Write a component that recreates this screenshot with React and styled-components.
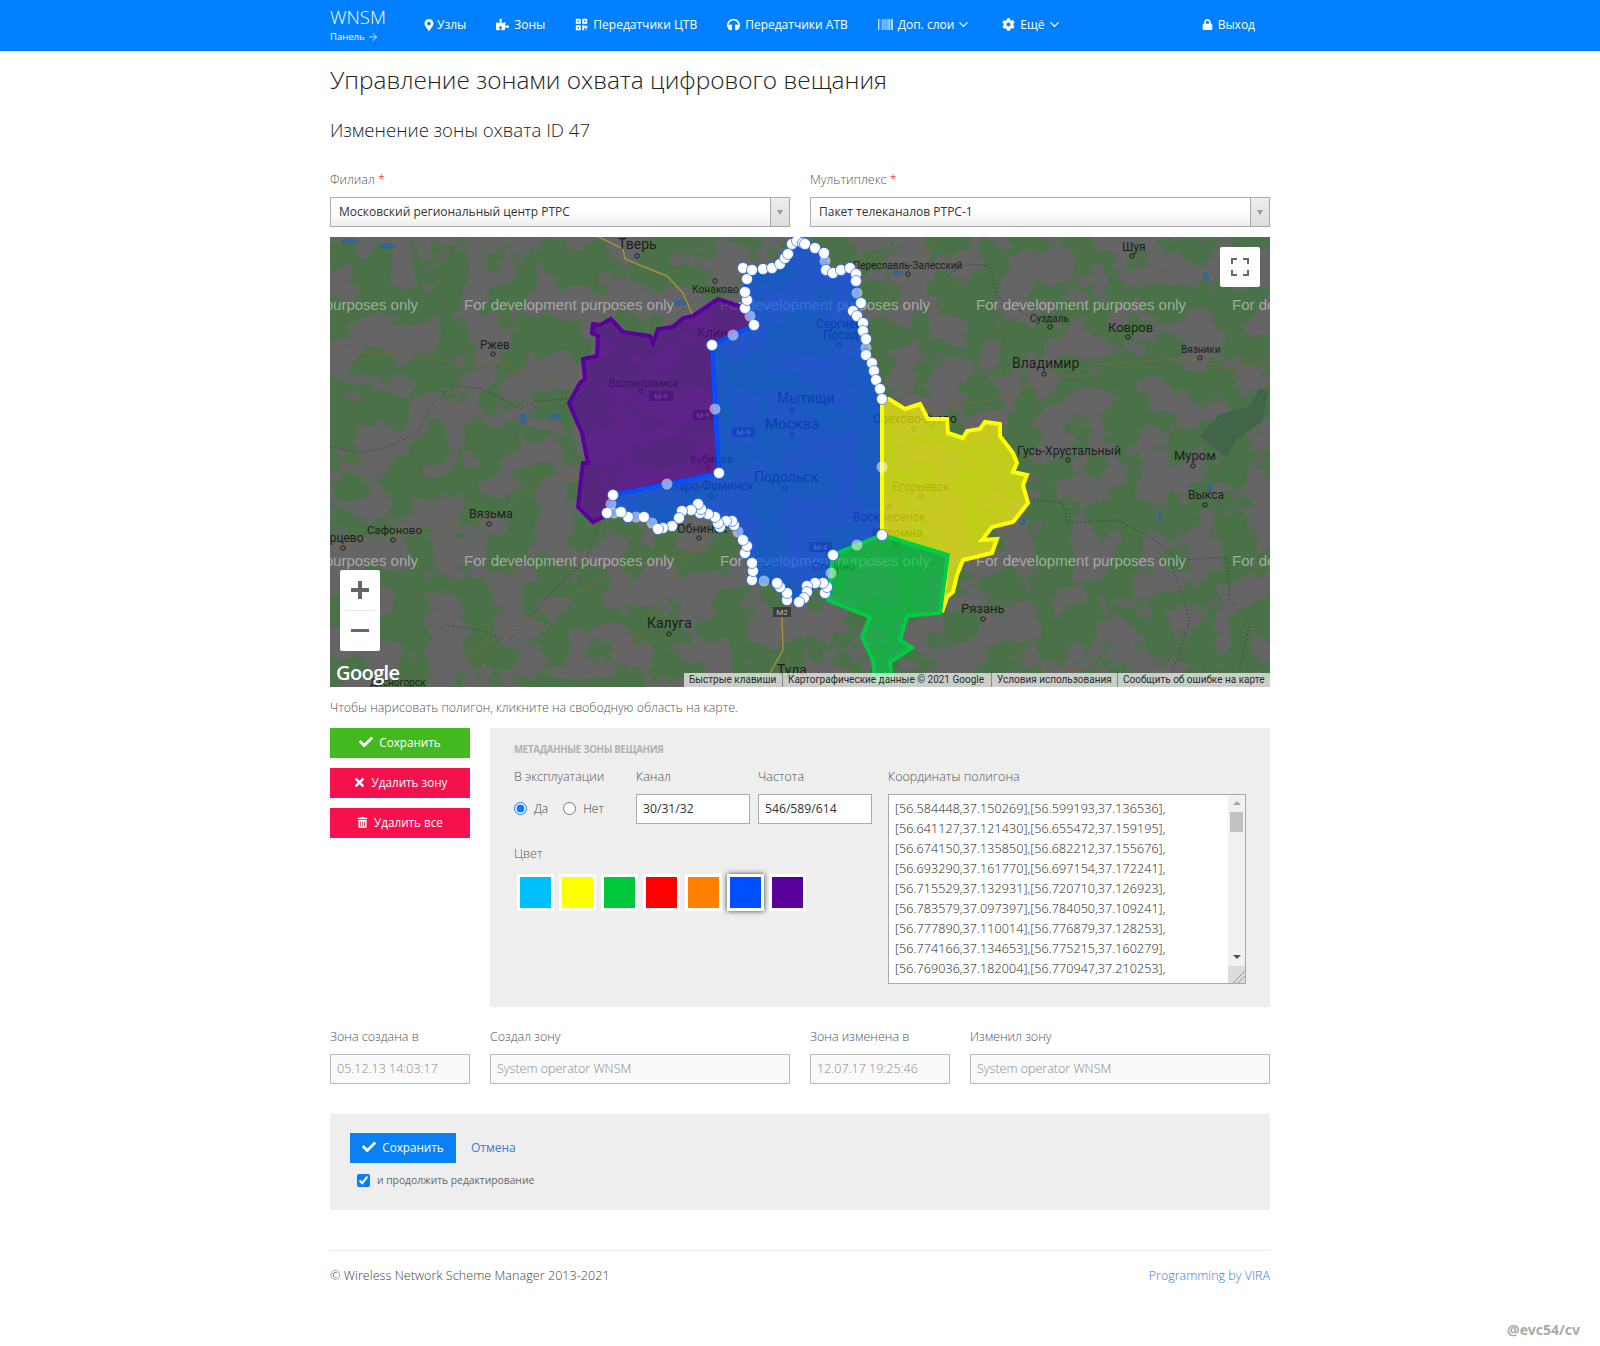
import React from 'react';
import styled, { createGlobalStyle } from 'styled-components';
import { FaMapMarkerAlt, FaPuzzlePiece, FaQrcode, FaHeadphones, FaBarcode, FaCog, FaLock, FaCheck, FaTimes, FaTrashAlt } from 'react-icons/fa';
import { ArrowRight, ChevronDown } from 'lucide-react';

const GlobalStyle = createGlobalStyle`
  html, body { margin: 0; padding: 0; background: #fff; }
  body { font-family: "Open Sans", "Liberation Sans", sans-serif; font-size: 12px; color: #333; min-height: 1346px; position: relative; }
  * { box-sizing: border-box; }
`;

const Navbar = styled.nav`
  background: #0080ff;
  height: 51px;
  color: #fff;
`;
const NavInner = styled.div`
  width: 940px;
  height: 100%;
  margin: 0 auto;
  padding-bottom: 2px;
  display: flex;
  align-items: center;
`;
const Brand = styled.a`
  display: block;
  width: 93px;
  margin-bottom: 4px;
  color: #fff;
`;
const BrandName = styled.div`
  font-size: 18.5px;
  font-weight: 300;
  line-height: 22px;
`;
const BrandSub = styled.div`
  font-size: 9.5px;
  line-height: 12px;
  margin-top: 3px;
  margin-bottom: -3px;
  display: flex;
  align-items: center;
  gap: 2px;
`;
const NavLink = styled.a`
  display: flex;
  align-items: center;
  gap: ${p => p.$gap ?? 5}px;
  font-size: 12px;
  color: #fff;
  margin-right: 30px;
  svg { flex: none; }
`;
const NavExit = styled(NavLink)`
  margin: 0 15px 0 auto;
`;
const NavChevron = styled(ChevronDown)`
  margin: 0 1px 0 -3px;
`;

const Page = styled.main`
  width: 940px;
  margin: 0 auto;
`;
const Title = styled.h1`
  font-size: 24.4px;
  font-weight: 300;
  line-height: 32px;
  margin: 13px 0 0;
  color: #222;
`;
const Subtitle = styled.h2`
  font-size: 18.6px;
  font-weight: 300;
  line-height: 24px;
  margin: 22px 0 0;
  color: #222;
`;
const Grid = styled.div`
  display: grid;
  grid-template-columns: repeat(12, 60px);
  column-gap: 20px;
  margin-top: ${p => p.$top || 0}px;
`;
const Col = styled.div`
  grid-column: span ${p => p.$span};
`;
const Label = styled.label`
  display: block;
  padding-top: 1px;
  font-size: 12.5px;
  font-weight: 300;
  line-height: 16px;
  margin-bottom: 9px;
  color: #555;
`;
const Req = styled.span`
  color: #e22;
`;
const SelectBox = styled.div`
  display: flex;
  height: 30px;
  border: 1px solid #aaa;
  background: linear-gradient(#fff 50%, #eee);
`;
const SelectValue = styled.div`
  flex: 1;
  padding-left: 8px;
  line-height: 28px;
  font-size: 12px;
  color: #333;
`;
const SelectArrow = styled.div`
  width: 19px;
  border-left: 1px solid #aaa;
  background: linear-gradient(#eee, #ddd);
  display: flex;
  align-items: center;
  justify-content: center;
  &::after {
    content: '';
    border: 3px solid transparent;
    border-top: 5px solid #999;
    border-bottom: 0;
  }
`;

const MapFrame = styled.div`
  position: relative;
  height: 450px;
  margin-top: 10px;
  overflow: hidden;
  background: #656565;
`;
const MapSvg = styled.svg`
  display: block;
  font-family: Roboto, "Liberation Sans", sans-serif;
`;
const FullscreenButton = styled.button`
  position: absolute;
  top: 10px;
  right: 10px;
  width: 40px;
  height: 40px;
  padding: 0;
  border: 0;
  border-radius: 2px;
  background: #fff;
  display: flex;
  align-items: center;
  justify-content: center;
`;
const ZoomControl = styled.div`
  position: absolute;
  left: 10px;
  top: 333px;
  width: 40px;
  height: 81px;
  border-radius: 2px;
  background: #fff;
  display: flex;
  flex-direction: column;
  align-items: center;
`;
const ZoomButton = styled.div`
  height: 40px;
  width: 100%;
  display: flex;
  align-items: center;
  justify-content: center;
`;
const ZoomDivider = styled.div`
  width: 30px;
  height: 1px;
  background: #e6e6e6;
`;
const GoogleLogo = styled.div`
  position: absolute;
  left: 6px;
  bottom: 2px;
  color: #fff;
  font-family: "Open Sans", "Liberation Sans", sans-serif;
  font-size: 20px;
  font-weight: 600;
  line-height: 24px;
  letter-spacing: -0.6px;
`;
const Attribution = styled.div`
  position: absolute;
  right: 0;
  bottom: 0;
  width: 586px;
  height: 14px;
  display: flex;
  align-items: center;
  background: rgba(255, 255, 255, 0.68);
  font-family: Roboto, "Liberation Sans", sans-serif;
  font-size: 10px;
  color: #2a2a2a;
`;
const AttributionItem = styled.span`
  padding: 0 5px;
  line-height: 14px;
  white-space: nowrap;
  width: ${p => p.$width}px;
  & + & { border-left: 1px solid #888; }
`;

const Hint = styled.p`
  font-size: 12.35px;
  font-weight: 300;
  line-height: 16px;
  margin: 13px 0 0;
  color: #555;
`;
const ButtonStack = styled.div`
  display: flex;
  flex-direction: column;
  gap: 10px;
`;
const Button = styled.button`
  height: 30px;
  width: ${p => p.$width || '100%'};
  border: 0;
  padding: 0 0 2px;
  color: #fff;
  background: ${p => p.$bg};
  font-family: inherit;
  font-size: 11.7px;
  display: flex;
  align-items: center;
  justify-content: center;
  gap: 6px;
`;
const MetaPanel = styled.section`
  background: #eee;
  padding: 15px 24px 23px;
`;
const MetaTitle = styled.h3`
  margin: 0 0 11px;
  font-size: 9.7px;
  line-height: 14px;
  font-weight: 700;
  text-transform: uppercase;
  color: #b0b0b0;
  letter-spacing: -0.3px;
`;
const MetaColumns = styled.div`
  display: grid;
  grid-template-columns: 358px 358px;
  column-gap: 16px;
`;
const MetaFields = styled.div`
  display: grid;
  grid-template-columns: repeat(3, 114px);
  column-gap: 8px;
`;
const RadioRow = styled.div`
  height: 30px;
  padding-bottom: 1px;
  display: flex;
  align-items: center;
  font-size: 12px;
  font-weight: 300;
  color: #444;
`;
const RadioItem = styled.label`
  display: flex;
  align-items: center;
  gap: 7px;
  margin-right: 15px;
  input { margin: 0; width: 13px; height: 13px; accent-color: #0a7cff; }
`;
const TextInput = styled.input`
  display: block;
  width: 100%;
  height: 30px;
  padding: 0 6px 2px;
  border: 1px solid ${p => (p.disabled ? '#bbb' : '#aaa')};
  border-radius: 0;
  background: ${p => (p.disabled ? '#fafafa' : '#fff')};
  font-family: inherit;
  font-size: ${p => (p.disabled ? 12.5 : 12.2)}px;
  font-weight: ${p => (p.disabled ? 300 : 400)};
  color: ${p => (p.disabled ? '#888' : '#333')};
  outline: 0;
`;
const ColorLabel = styled(Label)`
  margin: 21px 0 12px;
`;
const Swatches = styled.div`
  display: flex;
  gap: 5px;
  padding-left: 3px;
`;
const Swatch = styled.div`
  width: 37px;
  height: 37px;
  border: 3px solid #fff;
  background: ${p => p.$color};
  box-shadow: ${p => (p.$selected ? '0 0 5px rgba(0, 0, 0, 0.75)' : 'none')};
`;
const CoordsWrap = styled.div`
  position: relative;
  height: 190px;
`;
const CoordsArea = styled.textarea`
  display: block;
  width: 100%;
  height: 100%;
  padding: 4px 24px 0 6px;
  border: 1px solid #aaa;
  border-radius: 0;
  background: #fff;
  font-family: inherit;
  font-size: 12.5px;
  font-weight: 300;
  letter-spacing: 0.08px;
  line-height: 20px;
  color: #222;
  resize: none;
  overflow: hidden;
  outline: 0;
`;
const Scrollbar = styled.div`
  position: absolute;
  top: 1px;
  right: 1px;
  bottom: 1px;
  width: 17px;
  background: #f1f1f1;
  display: flex;
  flex-direction: column;
  align-items: center;
`;
const ScrollUp = styled.div`
  margin-top: 6px;
  border: 4px solid transparent;
  border-bottom: 4px solid #a3a3a3;
  border-top: 0;
`;
const ScrollThumb = styled.div`
  width: 13px;
  height: 20px;
  margin-top: 7px;
  background: #c1c1c1;
`;
const ScrollDown = styled.div`
  margin-top: 123px;
  border: 4px solid transparent;
  border-top: 4px solid #505050;
  border-bottom: 0;
`;
const ResizeCorner = styled.div`
  margin-top: auto;
  width: 17px;
  height: 17px;
  background:
    linear-gradient(135deg, transparent 62%, #999 62%, #999 66%, transparent 66%, transparent 78%, #999 78%, #999 82%, transparent 82%),
    #dcdcdc;
`;
const ActionPanel = styled.section`
  margin-top: 30px;
  height: 96px;
  padding: 19px 20px 0;
  background: #eee;
`;
const ActionRow = styled.div`
  display: flex;
  align-items: center;
  gap: 15px;
`;
const CancelLink = styled.a`
  font-size: 12px;
  color: #3a7bd5;
  margin-top: -2px;
`;
const ContinueRow = styled.label`
  display: flex;
  align-items: center;
  gap: 7px;
  margin: 10px 0 0 7px;
  font-size: 10.3px;
  color: #666;
  input { margin: 0; width: 13px; height: 13px; accent-color: #0a7cff; }
`;
const Footer = styled.footer`
  margin-top: 40px;
  padding-top: 17px;
  border-top: 1px solid #eee;
  display: flex;
  justify-content: space-between;
  font-size: 12.5px;
  font-weight: 300;
  line-height: 16px;
  color: #444;
`;
const Copyright = styled.span`
  letter-spacing: 0.07px;
`;
const FooterLink = styled.a`
  color: #3a7bd5;
`;
const Watermark = styled.div`
  position: absolute;
  right: 20px;
  bottom: 7px;
  font-family: "Noto Sans", sans-serif;
  font-size: 14px;
  font-weight: 700;
  color: #aaa;
`;

const cities = [
  ['Тверь', 618, 249, 14, 637, 256], ['Конаково', 692, 293, 10.3, 715, 281], ['Ржев', 480, 349, 12, 493, 354],
  ['Клин', 697, 337, 13], ['Волоколамск', 609, 387, 11, 641, 391], ['Мытищи', 777, 403, 14, 792, 410],
  ['Москва', 765, 429, 15, 792, 435], ['Кубинка', 690, 463, 11, 708, 467], ['Наро-Фоминск', 670, 490, 12, 711, 496],
  ['Подольск', 754, 482, 14, 785, 488], ['Сергиев', 816, 328, 12], ['Посад', 823, 339, 12, 839, 345],
  ['Шуя', 1122, 251, 12, 1132, 256], ['Переславль-Залесский', 853, 269, 10, 908, 274], ['Суздаль', 1030, 322, 10, 1050, 327],
  ['Ковров', 1108, 332, 13, 1128, 337], ['Вязники', 1181, 353, 10, 1200, 358], ['Владимир', 1012, 368, 14, 1044, 374],
  ['Орехово-Зуево', 873, 423, 12, 914, 429], ['Гусь-Хрустальный', 1017, 455, 12.2, 1068, 460], ['Муром', 1174, 460, 13, 1193, 466],
  ['Выкса', 1188, 499, 12, 1205, 505], ['Егорьевск', 892, 491, 12, 921, 496], ['Воскресенск', 853, 521, 12, 889, 507],
  ['Коломна', 872, 537, 12, 896, 543], ['Ступино', 812, 570, 11, 836, 572], ['Рязань', 961, 613, 13, 983, 619],
  ['Калуга', 647, 628, 14, 669, 634], ['Тула', 777, 675, 14], ['Вязьма', 469, 518, 12.5, 489, 524],
  ['Сафоново', 367, 534, 11.5, 393, 540], ['Ярцево', 322, 542, 12, 343, 548], ['Обнинск', 677, 533, 12.5, 699, 538],
  ['Десногорск', 370, 686, 10],
];

const shields = [
  ['М-9', 649, 391, 24], ['М-9', 693, 410, 20], ['М-9', 732, 427, 23], ['М-4', 809, 542, 23], ['М2', 773, 607, 18],
];

const roads = [
  ['597,236 623,249 625,259 647,268 667,276 683,293 693,316', '#a58f3d', 1.5],
  ['330,351 390,353 450,361 497,361 520,371 580,383', '#77683f', 1],
  ['330,548 393,535 430,528 473,525 503,510 543,480 563,477 580,477', '#77683f', 1],
  ['430,680 510,630 623,567 680,557 700,548 707,530', '#77683f', 1],
  ['583,687 603,660 647,630 660,600 677,570 703,547', '#77683f', 1],
  ['782,617 783,650 770,673', '#a58f3d', 1.5],
  ['783,650 797,673', '#77683f', 1],
  ['927,411 1013,396 1047,376 1087,376 1097,364 1190,358 1233,369 1270,358', '#77683f', 1],
  ['950,593 982,618 1013,640 1043,672 1087,670', '#77683f', 1],
  ['877,313 900,279 913,274 937,236', '#77683f', 1],
];

const borders = [
  '330,446 363,453 390,446 417,433 430,406 453,386 480,388 503,399 520,409 537,401 567,399',
  '1033,500 1063,503 1067,523 1117,520 1150,537 1180,560 1227,557 1230,600 1250,623 1240,667',
  '947,276 967,264 990,266 997,296 1033,319',
  '600,522 585,560 545,600 510,640',
  '430,640 445,625 480,630 505,640',
  '1170,560 1190,620 1170,680',
];

const lakes = [
  [350, 241, 9, 3], [387, 246, 8, 3], [680, 303, 8, 3], [523, 419, 4, 6], [555, 416, 8, 3], [898, 273, 5, 3],
  [1206, 277, 3, 5], [1023, 522, 3, 4], [1210, 488, 2, 5], [1160, 517, 2, 6],
];

const purpleZone = '718,299 693,316 683,318 673,327 658,329 653,343 650,336 623,332 611,319 600,325 593,324 592,333 598,336 597,356 583,359 585,379 580,383 569,403 582,433 588,463 583,463 582,470 578,507 593,522 607,515 613,495 719,473 712,345 754,325 745,308';
const yellowZone = '882,399 889,399 905,409 920,404 928,419 947,419 948,433 963,438 967,431 980,429 985,422 1000,424 1000,436 1013,453 1017,463 1013,472 1027,475 1023,485 1028,503 1013,522 992,527 982,540 997,539 992,553 963,560 957,575 953,592 947,597 942,612 948,555 882,535';
const greenZone = '882,535 948,555 940,613 907,616 900,640 912,648 890,662 892,680 875,680 873,660 862,637 870,617 845,607 828,600 831,573 833,555 857,545';

// third value marks a ghost (mid-segment) handle
const blueHandles = [
  [712, 345], [733, 335, 1], [754, 325], [750, 316, 1], [745, 308], [747, 300], [745, 292], [747, 279], [743, 268], [752, 270], [763, 269], [772, 268], [780, 264], [785, 258], [788, 254], [792, 244], [797, 241], [803, 243],
  [805, 244], [815, 248], [824, 253], [825, 261, 1], [826, 270], [833, 273], [841, 270], [850, 268], [856, 274], [856, 281], [857, 293, 1], [861, 303], [853, 311], [857, 316], [863, 323], [863, 331], [866, 339], [866, 348, 1], [866, 355], [872, 363], [874, 371], [876, 380], [880, 389], [882, 399],
  [882, 467, 1], [882, 535], [857, 545, 1], [833, 555], [831, 573, 1], [825, 593], [827, 587], [823, 583], [815, 583], [807, 586], [807, 592], [804, 598], [799, 602], [787, 600], [787, 593], [780, 587], [777, 583], [764, 581, 1], [752, 580], [753, 571], [752, 563], [745, 553], [747, 546], [743, 540], [738, 532, 1], [734, 525], [732, 521], [726, 521], [720, 527], [718, 523], [715, 517], [708, 514], [700, 513], [701, 509], [698, 504], [691, 510], [682, 511], [679, 518], [672, 526], [663, 528], [658, 529], [652, 523, 1], [644, 517], [636, 517, 1], [628, 517], [621, 512], [614, 513, 1], [607, 513], [611, 504, 1], [613, 495], [667, 484, 1], [719, 473], [715, 409, 1],
];
const blueZone = blueHandles.map(([x, y]) => `${x},${y}`).join(' ');

const MapDrawing = () => (
  <MapSvg width="940" height="450" viewBox="330 237 940 450">
    <defs>
      <filter id="land" x="0" y="0" width="100%" height="100%" colorInterpolationFilters="sRGB">
        <feTurbulence type="fractalNoise" baseFrequency="0.028" numOctaves="5" seed="11" />
        <feColorMatrix values="0 0 0 0 0.29  0 0 0 0 0.445  0 0 0 0 0.282  18 0 0 0 -8.3" />
      </filter>
    </defs>
    <rect x="330" y="237" width="940" height="450" fill="#656565" />
    <rect x="330" y="237" width="940" height="450" filter="url(#land)" />
    <path d="M1200 436 l20 -22 30 -8 10 -18 8 4 -6 30 -26 18 -10 18z" fill="#42654a" />
    {lakes.map(([cx, cy, rx, ry], i) => <ellipse key={i} cx={cx} cy={cy} rx={rx} ry={ry} fill="#38658c" />)}
    {borders.map((points, i) => <polyline key={i} points={points} fill="none" stroke="#3f3f3f" strokeWidth="1" strokeDasharray="1.5 2.5" />)}
    {roads.map(([points, color, width], i) => <polyline key={i} points={points} fill="none" stroke={color} strokeWidth={width} />)}
    {[208, 464, 720, 976, 1232].map(x => [305, 561].map(y => (
      <text key={`${x}-${y}`} x={x} y={y + 5} fontSize="15" fill="#fff" fillOpacity="0.45" fontFamily='"Liberation Sans", sans-serif'>For development purposes only</text>
    )))}
    {shields.map(([name, x, y, w], i) => (
      <g key={i}>
        <rect x={x} y={y} width={w} height="10" fill="#3c3c3c" />
        <text x={x + w / 2} y={y + 8} fontSize="8" textAnchor="middle" fill="#bbb">{name}</text>
      </g>
    ))}
    {cities.map(([name, x, y, size, mx, my]) => (
      <g key={name}>
        <text x={x} y={y} fontSize={size} fill="#1d1d1d">{name}</text>
        {mx && <circle cx={mx} cy={my} r="2.2" fill="none" stroke="#1d1d1d" strokeWidth="1" />}
      </g>
    ))}
    <polygon points={purpleZone} fill="#5a009d" fillOpacity="0.65" stroke="#5a009d" strokeWidth="4" />
    <polygon points={blueZone} fill="#0050ff" fillOpacity="0.65" stroke="#0050ff" strokeWidth="4" />
    <polygon points={yellowZone} fill="#ffff00" fillOpacity="0.65" stroke="#ffff00" strokeWidth="4" />
    <polygon points={greenZone} fill="#00cc44" fillOpacity="0.65" stroke="#00cc44" strokeWidth="4" />
    {blueHandles.map(([x, y, ghost], i) => (
      <circle key={i} cx={x} cy={y} r="5.5" fill="#fff" fillOpacity={ghost ? 0.5 : 1} stroke={ghost ? 'none' : '#0050ff'} strokeWidth="0.6" />
    ))}
  </MapSvg>
);

const colors = ['#00bfff', '#ffff00', '#00c83c', '#ff0000', '#ff8000', '#0050ff', '#5a009d'];

const coords = `[56.584448,37.150269],[56.599193,37.136536],
[56.641127,37.121430],[56.655472,37.159195],
[56.674150,37.135850],[56.682212,37.155676],
[56.693290,37.161770],[56.697154,37.172241],
[56.715529,37.132931],[56.720710,37.126923],
[56.783579,37.097397],[56.784050,37.109241],
[56.777890,37.110014],[56.776879,37.128253],
[56.774166,37.134653],[56.775215,37.160279],
[56.769036,37.182004],[56.770947,37.210253],`;

const App = () => (
  <>
    <GlobalStyle />
    <Navbar>
      <NavInner>
        <Brand>
          <BrandName>WNSM</BrandName>
          <BrandSub>Панель <ArrowRight size={12} strokeWidth={1.5} /></BrandSub>
        </Brand>
        <NavLink $gap={2}><FaMapMarkerAlt size={12} /> Узлы</NavLink>
        <NavLink><FaPuzzlePiece size={13} /> Зоны</NavLink>
        <NavLink><FaQrcode size={13} /> Передатчики ЦТВ</NavLink>
        <NavLink><FaHeadphones size={13} /> Передатчики АТВ</NavLink>
        <NavLink><FaBarcode size={15} /> Доп. слои <NavChevron size={15} /></NavLink>
        <NavLink><FaCog size={13} /> Ещё <NavChevron size={15} /></NavLink>
        <NavExit><FaLock size={11} /> Выход</NavExit>
      </NavInner>
    </Navbar>
    <Page>
      <Title>Управление зонами охвата цифрового вещания</Title>
      <Subtitle>Изменение зоны охвата ID 47</Subtitle>
      <Grid $top={29}>
        <Col $span={6}>
          <Label>Филиал <Req>*</Req></Label>
          <SelectBox><SelectValue>Московский региональный центр РТРС</SelectValue><SelectArrow /></SelectBox>
        </Col>
        <Col $span={6}>
          <Label>Мультиплекс <Req>*</Req></Label>
          <SelectBox><SelectValue>Пакет телеканалов РТРС-1</SelectValue><SelectArrow /></SelectBox>
        </Col>
      </Grid>
      <MapFrame>
        <MapDrawing />
        <FullscreenButton>
          <svg width="18" height="18" viewBox="0 0 18 18" fill="none" stroke="#666" strokeWidth="2">
            <path d="M1 6V1h5M12 1h5v5M17 12v5h-5M6 17H1v-5" />
          </svg>
        </FullscreenButton>
        <ZoomControl>
          <ZoomButton>
            <svg width="18" height="18" viewBox="0 0 18 18" fill="#666"><path d="M7 0h4v7h7v4h-7v7H7v-7H0V7h7z" /></svg>
          </ZoomButton>
          <ZoomDivider />
          <ZoomButton>
            <svg width="18" height="18" viewBox="0 0 18 18" fill="#666"><path d="M0 7h18v3H0z" /></svg>
          </ZoomButton>
        </ZoomControl>
        <GoogleLogo>Google</GoogleLogo>
        <Attribution>
          <AttributionItem $width={98}>Быстрые клавиши</AttributionItem>
          <AttributionItem $width={209}>Картографические данные © 2021 Google</AttributionItem>
          <AttributionItem $width={126}>Условия использования</AttributionItem>
          <AttributionItem $width={153}>Сообщить об ошибке на карте</AttributionItem>
        </Attribution>
      </MapFrame>
      <Hint>Чтобы нарисовать полигон, кликните на свободную область на карте.</Hint>
      <Grid $top={12}>
        <Col $span={2}>
          <ButtonStack>
            <Button $bg="#42b91e"><FaCheck size={14} /> Сохранить</Button>
            <Button $bg="#f5114b"><FaTimes size={13} /> Удалить зону</Button>
            <Button $bg="#f5114b"><FaTrashAlt size={11} /> Удалить все</Button>
          </ButtonStack>
        </Col>
        <Col $span={10}>
          <MetaPanel>
            <MetaTitle>Метаданные зоны вещания</MetaTitle>
            <MetaColumns>
              <div>
                <MetaFields>
                  <div>
                    <Label>В эксплуатации</Label>
                    <RadioRow>
                      <RadioItem><input type="radio" name="active" defaultChecked /> Да</RadioItem>
                      <RadioItem><input type="radio" name="active" /> Нет</RadioItem>
                    </RadioRow>
                  </div>
                  <div>
                    <Label>Канал</Label>
                    <TextInput defaultValue="30/31/32" />
                  </div>
                  <div>
                    <Label>Частота</Label>
                    <TextInput defaultValue="546/589/614" />
                  </div>
                </MetaFields>
                <ColorLabel>Цвет</ColorLabel>
                <Swatches>
                  {colors.map((c, i) => <Swatch key={c} $color={c} $selected={i === 5} />)}
                </Swatches>
              </div>
              <div>
                <Label>Координаты полигона</Label>
                <CoordsWrap>
                  <CoordsArea defaultValue={coords} spellCheck={false} />
                  <Scrollbar>
                    <ScrollUp />
                    <ScrollThumb />
                    <ScrollDown />
                    <ResizeCorner />
                  </Scrollbar>
                </CoordsWrap>
              </div>
            </MetaColumns>
          </MetaPanel>
        </Col>
      </Grid>
      <Grid $top={21}>
        <Col $span={2}><Label>Зона создана в</Label><TextInput disabled value="05.12.13 14:03:17" /></Col>
        <Col $span={4}><Label>Создал зону</Label><TextInput disabled value="System operator WNSM" /></Col>
        <Col $span={2}><Label>Зона изменена в</Label><TextInput disabled value="12.07.17 19:25:46" /></Col>
        <Col $span={4}><Label>Изменил зону</Label><TextInput disabled value="System operator WNSM" /></Col>
      </Grid>
      <ActionPanel>
        <ActionRow>
          <Button $bg="#0a80f5" $width="106px"><FaCheck size={14} /> Сохранить</Button>
          <CancelLink>Отмена</CancelLink>
        </ActionRow>
        <ContinueRow><input type="checkbox" defaultChecked /> и продолжить редактирование</ContinueRow>
      </ActionPanel>
      <Footer>
        <Copyright>© Wireless Network Scheme Manager 2013-2021</Copyright>
        <FooterLink>Programming by VIRA</FooterLink>
      </Footer>
    </Page>
    <Watermark>@evc54/cv</Watermark>
  </>
);

export default App;
